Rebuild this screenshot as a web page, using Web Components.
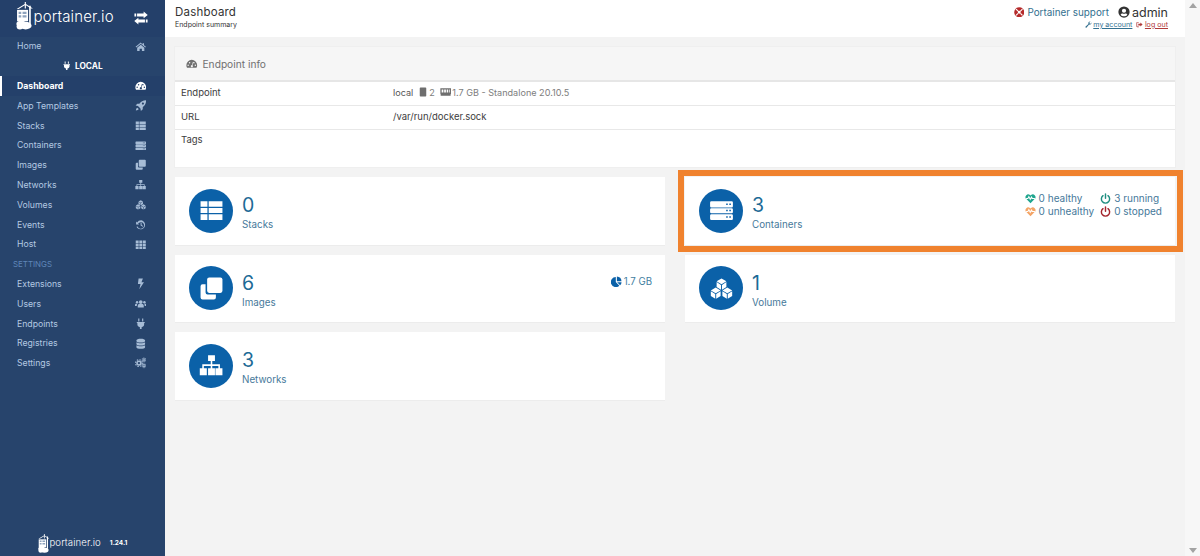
<!DOCTYPE html>
<html lang="en">
<head>
<meta charset="utf-8">
<title>Portainer dashboard</title>
<style>
html,body{margin:0;height:100%;overflow:hidden}
body{font-family:Inter,"Open Sans","Liberation Sans",sans-serif;background:#f3f3f3}
</style>
</head>
<body>
<x-app>
  <x-sidebar slot="side">
    <x-nav icon="home">Home</x-nav>
    <x-nav-title>LOCAL</x-nav-title>
    <x-nav icon="tach" active>Dashboard</x-nav>
    <x-nav icon="rocket">App Templates</x-nav>
    <x-nav icon="thlist">Stacks</x-nav>
    <x-nav icon="server">Containers</x-nav>
    <x-nav icon="clone">Images</x-nav>
    <x-nav icon="sitemap">Networks</x-nav>
    <x-nav icon="cubes">Volumes</x-nav>
    <x-nav icon="history">Events</x-nav>
    <x-nav icon="th">Host</x-nav>
    <x-nav-section>SETTINGS</x-nav-section>
    <x-nav icon="bolt">Extensions</x-nav>
    <x-nav icon="users">Users</x-nav>
    <x-nav icon="plug">Endpoints</x-nav>
    <x-nav icon="db">Registries</x-nav>
    <x-nav icon="cogs">Settings</x-nav>
  </x-sidebar>
  <x-topbar slot="top"></x-topbar>
  <x-panel>
    <x-row label="Endpoint"><x-endpoint-meta></x-endpoint-meta></x-row>
    <x-row label="URL">/var/run/docker.sock</x-row>
    <x-row label="Tags" tall></x-row>
  </x-panel>
  <x-card-grid>
    <x-card icon="thlist" value="0" label="Stacks"></x-card>
    <x-card icon="server" value="3" label="Containers" highlight>
      <x-container-stats></x-container-stats>
    </x-card>
    <x-card icon="clone" value="6" label="Images">
      <x-size-stat>1.7 GB</x-size-stat>
    </x-card>
    <x-card icon="cubes" value="1" label="Volume"></x-card>
    <x-card icon="sitemap" value="3" label="Networks"></x-card>
  </x-card-grid>
</x-app>

<script>
const cube=(x,y,s)=>{
  const w=s*.87,h=s*.5;
  const p=a=>a.map(q=>q.map(n=>+n.toFixed(2)).join(',')).join(' ');
  return `<polygon points="${p([[x,y-s],[x+w,y-h],[x,y],[x-w,y-h]])}"/>`+
  `<polygon points="${p([[x-w,y-h+.5],[x-.3,y+.5],[x-.3,y+s],[x-w,y+h]])}"/>`+
  `<polygon points="${p([[x+w,y-h+.5],[x+.3,y+.5],[x+.3,y+s],[x+w,y+h]])}"/>`;
};
const BEAT='<path fill-rule="evenodd" d="M8 14.800 1.700 8.400A3.900 3.900 0 0 1 7.200 2.900l.8.800.8-.8a3.900 3.900 0 0 1 5.500 5.500zM1 7.300v1.400h3.600l1-1.900 2 4 1.700-3.300.6 1.200H15V7.300h-3.800L9.300 4.400 7.600 7.800l-2-4-1.800 3.500z"/>';
const ICONS={
 home:'<path d="M8 2 .8 8l.9 1.100L8 3.900l6.300 5.200.9-1.100-2.700-2.200V3h-2v1.700z"/><path d="M3 9.400 8 5.300l5 4.100V14H9.600v-3.300H6.400V14H3z"/>',
 tach:'<path fill-rule="evenodd" d="M8 2.500A7.500 7.500 0 0 0 .5 10c0 1.400.4 2.600 1 3.600h13c.6-1 1-2.200 1-3.600A7.500 7.500 0 0 0 8 2.500zM3 9.200a1 1 0 1 1 0 2 1 1 0 0 1 0-2zm2-3.600a1 1 0 1 1 0 2 1 1 0 0 1 0-2zm6 0a1 1 0 1 1 0 2 1 1 0 0 1 0-2zm2 3.600a1 1 0 1 1 0 2 1 1 0 0 1 0-2zM10.200 6 9 10.200a1.500 1.500 0 1 1-2 .3 1.500 1.500 0 0 1 1.300-.6L9.400 5.800z"/>',
 rocket:'<path fill-rule="evenodd" d="M15.500.5c-4.200 0-7.300 1.700-9.400 4.700H3.200L.8 7.800l3.300.6 3.500 3.500.6 3.300 2.600-2.400V10c3-2.100 4.700-5.200 4.700-9.500zM11 3.500a1.500 1.500 0 1 1 0 3 1.500 1.500 0 0 1 0-3z"/><path d="M3.300 10.700c-1.300.4-2 1.800-2.100 4 2.200-.1 3.600-.8 4-2.100z"/>',
 thlist:'<path d="M1 2h4.400v3.600H1zM6.200 2H15v3.600H6.200zM1 6.400h4.400v3.200H1zM6.200 6.400H15v3.200H6.200zM1 10.400h4.400V14H1zM6.200 10.400H15V14H6.200z"/>',
 server:'<path fill-rule="evenodd" d="M1.500 2h13a.8.800 0 0 1 .8.800v2.500a.8.800 0 0 1-.8.800h-13a.8.800 0 0 1-.8-.800V2.800a.8.800 0 0 1 .8-.800zm9.500 1.500v1h1v-1zm2 0v1h1v-1zM1.500 6.500h13a.8.800 0 0 1 .8.800v1.600a.8.800 0 0 1-.8.800h-13a.8.800 0 0 1-.8-.800V7.300a.8.800 0 0 1 .8-.800zm9.500 1v1h1v-1zm2 0v1h1v-1zM1.500 10.400h13a.8.800 0 0 1 .8.800v2a.8.800 0 0 1-.8.800h-13a.8.800 0 0 1-.8-.800v-2a.8.800 0 0 1 .8-.800zm9.500 1.300v1h1v-1zm2 0v1h1v-1z"/>',
 clone:'<path d="M6.500 1h7.200A1.300 1.300 0 0 1 15 2.300v7.200a1.300 1.300 0 0 1-1.300 1.300H6.500a1.300 1.300 0 0 1-1.300-1.300V2.300A1.300 1.300 0 0 1 6.500 1z"/><path d="M4.200 5.200v5.300a1.300 1.300 0 0 0 1.300 1.300h5.300v1.900A1.300 1.300 0 0 1 9.500 15H2.300A1.300 1.300 0 0 1 1 13.700V6.500a1.300 1.300 0 0 1 1.300-1.300z"/>',
 sitemap:'<path d="M5.800 1.500h4.400v3.600H8.500v2.100h4.900v2.600H15v4.400h-4.500V9.800h1.900V8.300H8.500v1.500h1.700v4.400H5.800V9.800h1.700V8.300H3.100v1.500H5v4.400H.5V9.800h1.600V7.200h5.400V5.100H5.800z"/>',
 cubes:cube(8,5.200,3.600)+cube(4.300,11,3.600)+cube(11.700,11,3.600),
 history:'<path d="M8.500 1.800A6.300 6.300 0 0 0 3 5L1.500 3.500v4.300h4.300L4.300 6.300a4.600 4.600 0 1 1-.6 4.100l-1.600.5a6.300 6.300 0 1 0 6.400-9.100z"/><path d="M7.800 4.800h1.400v3.500l2.200 1.400-.7 1.100-2.900-1.800z"/>',
 th:'<path d="M1 2h4.100v3.600H1zM6 2h4v3.600H6zM10.900 2H15v3.600h-4.100zM1 6.300h4.100v3.500H1zM6 6.300h4v3.500H6zM10.900 6.300H15v3.500h-4.100zM1 10.500h4.100V14H1zM6 10.500h4V14H6zM10.900 10.500H15V14h-4.100z"/>',
 bolt:'<path d="M5 .8h6L9 5.800h3.500L6 15.500l1.700-7.300H4z"/>',
 users:'<circle cx="8" cy="5.600" r="2.600"/><path d="M3.800 13.300V11c0-1.800 1.200-2.700 2.200-2.700h4c1 0 2.200.9 2.200 2.700v2.300z"/><circle cx="2.900" cy="5.800" r="1.700"/><circle cx="13.100" cy="5.800" r="1.700"/><path d="M0 11.300V9.800C0 8.600.8 8 1.700 8h1.700c-.6.600-.9 1.600-.9 3v.3zM16 11.300V9.800c0-1.200-.8-1.800-1.700-1.800h-1.700c.6.600.9 1.600.9 3v.3z"/>',
 plug:'<path d="M4.500.8h1.600v4H4.500zM9.900.8h1.600v4H9.900zM2.500 5.400h11v1.500h-.8V9c0 2-1.500 3.400-3.500 3.700v2.500H6.800v-2.500C4.800 12.400 3.300 11 3.300 9V6.900h-.8z"/>',
 db:'<path d="M2 3.200C2 1.800 4.700 1 8 1s6 .8 6 2.200v1C14 5.600 11.300 6.400 8 6.400s-6-.8-6-2.200zM2 6c1.200.9 3.500 1.400 6 1.400S12.800 6.900 14 6v2.400c0 1.400-2.700 2.200-6 2.200s-6-.8-6-2.200zM2 10.200c1.200.9 3.500 1.400 6 1.400s4.800-.5 6-1.400v2.600C14 14.200 11.300 15 8 15s-6-.8-6-2.200z"/>',
 cogs:'<g fill="none" stroke="currentColor"><circle cx="5.500" cy="8.500" r="2.700" stroke-width="2.200"/><circle cx="5.500" cy="8.500" r="4.700" stroke-width="1.600" stroke-dasharray="2 1.700"/><circle cx="12.500" cy="4" r="1.500" stroke-width="1.500"/><circle cx="12.500" cy="4" r="2.900" stroke-width="1.100" stroke-dasharray="1.300 1"/><circle cx="12.500" cy="12" r="1.500" stroke-width="1.500"/><circle cx="12.500" cy="12" r="2.900" stroke-width="1.100" stroke-dasharray="1.300 1"/></g>',
 exchange:'<path d="M.5 2.800h2v3.400h-2zM3.500 2.800h7.500V.6l4.700 3.900L11 8.400V6.200H3.500z"/><path d="M15.500 9.800h-2v3.400h2zM12.500 9.800H5V7.600L.3 11.500 5 15.400v-2.200h7.500z"/>',
 heartbeat:BEAT,
 heart:BEAT,
 power:'<g fill="none" stroke="currentColor" stroke-width="2.100" stroke-linecap="round"><path d="M4.400 3.900a6 6 0 1 0 7.200 0"/><path d="M8 1.500v6"/></g>',
 pie:'<path d="M7 1.600v7.300l5.200 5.200A7.300 7.300 0 1 1 7 1.600z"/><path d="M8.500.8a7.300 7.300 0 0 1 6.800 6.800H8.500z"/><path d="M8.900 9h6.500a7.200 7.200 0 0 1-2.100 4.500z"/>',
 chip:'<path d="M4 .8h8A1.200 1.200 0 0 1 13.200 2v12a1.200 1.200 0 0 1-1.200 1.200H4A1.200 1.200 0 0 1 2.800 14V2A1.200 1.200 0 0 1 4 .8z"/>',
 memory:'<path fill-rule="evenodd" d="M.5 3h15v8h-.7v2.500H.9V11H.5zM2.300 4.800v4.400h2.400V4.800zm3.500 0v4.400h2.400V4.800zm3.500 0v4.400h1.900V4.800zm3 0v4.400h1.200V4.800z"/>',
 ring:'<path fill-rule="evenodd" d="M8 .3a7.700 7.700 0 1 1 0 15.400A7.700 7.700 0 0 1 8 .3zm0 5.500a2.200 2.200 0 1 0 0 4.400 2.200 2.200 0 0 0 0-4.400zM3.800 2.500 2.500 3.800l3.100 3 1.200-1.200zm8.400 0-3 3.100 1.200 1.200 3.100-3zM5.600 9.200l-3.100 3 1.300 1.300 3-3.100zm4.800 0-1.200 1.200 3 3.100 1.300-1.300z"/>',
 user:'<path fill-rule="evenodd" d="M8 .5a7.500 7.500 0 1 1 0 15 7.500 7.500 0 0 1 0-15zm0 3a2.800 2.800 0 1 0 0 5.600 2.800 2.800 0 0 0 0-5.600zm0 10.200c1.800 0 3.500-.8 4.500-2.100-.4-1.100-1.500-1.700-2.600-1.700-.6.200-1.200.3-1.900.3s-1.300-.1-1.900-.3c-1.100 0-2.200.6-2.600 1.700 1 1.300 2.700 2.100 4.500 2.100z"/>',
 wrench:'<path d="M15 4.200a4.200 4.200 0 0 1-5.600 4L3.700 14.600a1.500 1.500 0 0 1-2.300-2.200L7.800 6.600A4.200 4.200 0 0 1 12.600 1L10 3.700l.6 2.100 2.100.6 2.100-2.700z"/>',
 signout:'<path d="M6.500 2H3a2 2 0 0 0-2 2v8a2 2 0 0 0 2 2h3.500v-1.700H3.200a.5.500 0 0 1-.5-.5V4.200c0-.3.200-.5.500-.5h3.300z"/><path d="M10 3.500 15 8l-5 4.500V10H5.200V6H10z"/>'
};

function def(name,css,html){
  customElements.define(name,class extends HTMLElement{
    constructor(){super();this.attachShadow({mode:'open'});}
    connectedCallback(){
      const a=n=>this.getAttribute(n)??'';
      const body=typeof html==='function'?html(a,this):html;
      this.shadowRoot.innerHTML=`<style>${css}</style>${body}`;
    }
  });
}

def('x-icon',':host{display:inline-flex;width:1em;height:1em;flex:none;vertical-align:-.12em}svg{width:100%;height:100%;fill:currentColor;display:block}',
  a=>`<svg viewBox="0 0 16 16" aria-hidden="true">${ICONS[a('name')]||''}</svg>`);

def('x-logo',':host{display:inline-flex;align-items:center;color:#fff;font-family:Inter,"Open Sans",sans-serif;font-weight:300}svg{height:var(--h,28px);width:auto;display:block;flex:none;fill:#fff;margin-top:var(--sh,-4px)}span{font-size:var(--fs,15px);letter-spacing:var(--ls,.15px);margin-left:var(--gap,0px);line-height:1;margin-top:var(--sh,-4px)}',
  ()=>`<svg viewBox="0 0 20 32" aria-hidden="true">
    <path d="M.8 8 10 2.400V0h1.300v2.400l8 5.100h-2.200l-5.800-3.700v3.700H10V3.800L3 8z"/>
    <path d="M15 4.200h1.900V25H15z"/>
    <path d="M1.200 9h12.600v13H1.200z"/>
    <path d="M3 11h3v2.600H3zM3 15h3v2.600H3zM7.500 11H12v2.600H7.500zM7.500 15H12v2.600H7.500z" fill="#8ea3bd"/>
    <ellipse cx="6" cy="25" rx="5.600" ry="3.800"/>
    <ellipse cx="11" cy="27" rx="6.800" ry="4.400"/>
    <ellipse cx="4.500" cy="28" rx="3.800" ry="3.400"/>
  </svg><span>portainer.io</span>`);

def('x-nav-title',':host{display:flex;justify-content:center;align-items:center;height:19.800px;gap:3px;font-size:8.300px;font-weight:700;color:#fff;box-sizing:border-box}x-icon{font-size:9.500px}',
  ()=>`<x-icon name="plug"></x-icon><slot></slot>`);

def('x-nav-section',':host{display:flex;align-items:center;height:19.800px;padding-left:13px;font-size:7.900px;color:#5f86b8}','<slot></slot>');

def('x-nav',':host{display:flex;align-items:center;justify-content:space-between;height:19.800px;padding:0 19px 0 17px;font-size:8.700px;color:#b4c9e2;box-sizing:border-box}:host([active]){color:#fff;font-weight:700;background:#24406a;box-shadow:inset 2px 0 0 #fff}x-icon{font-size:11.500px;opacity:.9}:host([active]) x-icon{opacity:1}',
  a=>`<span><slot></slot></span><x-icon name="${a('icon')}"></x-icon>`);

def('x-sidebar',':host{display:flex;flex-direction:column;width:165px;height:556px;background:#27446c;flex:none;color:#fff}header{display:flex;align-items:center;justify-content:space-between;height:36.500px;padding:0 17px 0 16px;background:#24406a;box-sizing:border-box}header x-icon{font-size:14px}nav{flex:1;display:flex;flex-direction:column}footer{display:flex;align-items:center;justify-content:center;gap:9px;height:37px;font-size:6.500px;font-weight:700;padding-top:11px;box-sizing:border-box}footer x-logo{--h:19px;--fs:9.600px;--ls:.1px;--gap:0px;--sh:0px}',
  ()=>`<header><x-logo></x-logo><x-icon name="exchange"></x-icon></header><nav><slot></slot></nav><footer><x-logo></x-logo><span>1.24.1</span></footer>`);

def('x-topbar',`:host{display:flex;justify-content:space-between;height:37px;background:#fff;padding:0 17px 0 10px;box-sizing:border-box;flex:none}
.t{padding-top:5px;color:#333}.t b{display:block;font-weight:400;font-size:11.500px;line-height:14px;letter-spacing:.2px}.t small{display:block;font-size:7px;line-height:11px;color:#333}
.r{display:flex;flex-direction:column;align-items:flex-end;padding-top:4px}
.l1{display:flex;align-items:center;height:16px;font-size:9.900px;color:#33708f}.l1 x-icon{font-size:10.500px;color:#b52a2a;margin-right:3px}
.ad{display:flex;align-items:center;margin-left:9px;font-size:12.500px;color:#333}.l1 .ad x-icon{font-size:12px;color:#333;margin-right:2px}
.l2{display:flex;align-items:center;gap:4px;font-size:7.100px;height:10px;margin-top:-1px}.l2 a{display:flex;align-items:center;gap:1.500px;text-decoration:none}.l2 u{text-underline-offset:1px}.m{color:#33708f}.o{color:#b03a3a}.l2 x-icon{font-size:7px}`,
  ()=>`<div class="t"><b>Dashboard</b><small>Endpoint summary</small></div>
  <div class="r"><div class="l1"><x-icon name="ring"></x-icon><span>Portainer support</span><span class="ad"><x-icon name="user"></x-icon>admin</span></div>
  <div class="l2"><a class="m"><x-icon name="wrench"></x-icon><u>my account</u></a><a class="o"><x-icon name="signout"></x-icon><u>log out</u></a></div></div>`);

def('x-panel',`:host{display:block;background:#fff;box-shadow:0 0 0 1px #efefef;flex:none}
header{display:flex;align-items:center;gap:5px;height:33px;padding-left:11px;background:#f6f6f6;border-bottom:2px solid #e6e6e6;box-sizing:content-box;font-size:10.200px;color:#707070}
header x-icon{font-size:11.500px}`,
  ()=>`<header><x-icon name="tach"></x-icon>Endpoint info</header><slot></slot>`);

def('x-row',`:host{display:grid;grid-template-columns:212px 1fr;height:24px;padding:0 0 3px 6px;border-bottom:1px solid #e8e8e8;box-sizing:border-box;align-items:center;font-size:9.500px;color:#3d3d3d}
:host([tall]){height:37px;border-bottom:0;align-items:start;padding-top:4px}`,
  a=>`<span>${a('label')}</span><span><slot></slot></span>`);

def('x-endpoint-meta',':host{display:inline-flex;align-items:center;color:#7d7d7d;font-size:9.100px}b{font-weight:400;color:#555;margin-right:5px}x-icon{font-size:10px;color:#6e6e6e}.m{margin:0 1px 0 0}.s{margin-left:5px;margin-right:1px;font-size:11.500px}',
  ()=>`<b>local</b><x-icon class="m" name="chip"></x-icon><span>2</span><x-icon class="s" name="memory"></x-icon><span>1.7 GB - Standalone 20.10.5</span>`);

def('x-card-grid',':host{display:grid;grid-template-columns:1fr 1fr;column-gap:20px;row-gap:10px;grid-auto-rows:67.500px;margin-top:10px}','<slot></slot>');

def('x-card',`:host{display:flex;position:relative;background:#fff;box-shadow:0 1px 0 0 #ececec;padding:0 13px 0 14px;align-items:center;box-sizing:border-box}
.c{width:44px;height:44px;border-radius:50%;background:#0b61a8;color:#fff;display:flex;align-items:center;justify-content:center;flex:none;margin-right:9px}
.c x-icon{font-size:25px}
.b{padding-top:3px}
.v{font-size:19.500px;line-height:24px;color:#1d6a96;font-weight:400;padding-bottom:1px}
.l{font-size:9.800px;line-height:13px;color:#46799a}
.x{margin-left:auto;align-self:flex-start;padding-top:16px}
:host([highlight])::after{content:"";position:absolute;inset:-7px -8px -7px -7px;border:6px solid #f0822e;pointer-events:none}`,
  a=>`<div class="c"><x-icon name="${a('icon')}"></x-icon></div><div class="b"><div class="v">${a('value')}</div><div class="l">${a('label')}</div></div><div class="x"><slot></slot></div>`);

def('x-size-stat',':host{display:inline-flex;align-items:center;gap:2px;font-size:9.700px;color:#42809f;margin-top:-2px}x-icon{font-size:11px;color:#0b61a8}',
  ()=>`<x-icon name="pie"></x-icon><slot></slot>`);

def('x-container-stats',`:host{display:grid;grid-template-columns:auto auto;column-gap:6px;font-size:10px;line-height:13px;color:#46799a;margin-top:-1px}
span{display:flex;align-items:center;gap:3px;white-space:nowrap}x-icon{font-size:11px}.a{color:#1fa58e}.b{color:#f4a465}.d{color:#1f8e80}.e{color:#a3242c}`,
  ()=>`<span><x-icon class="a" name="heartbeat"></x-icon>0 healthy</span><span><x-icon class="d" name="power"></x-icon>3 running</span>
  <span><x-icon class="b" name="heart"></x-icon>0 unhealthy</span><span><x-icon class="e" name="power"></x-icon>0 stopped</span>`);

def('x-scrollbar',':host{display:flex;flex-direction:column;justify-content:space-between;align-items:center;width:15px;flex:none;background:#f7f7f7;height:556px;padding:3px 0;box-sizing:border-box}i{width:0;height:0;border-left:4px solid transparent;border-right:4px solid transparent}.u{border-bottom:5px solid #a3a3a3}.d{border-top:5px solid #a3a3a3}','<i class="u"></i><i class="d"></i>');

def('x-app',`:host{display:flex;width:1200px;height:556px;overflow:hidden}
main{flex:1;min-width:0;display:flex;flex-direction:column}
.content{padding:10px;flex:1}`,
  ()=>`<slot name="side"></slot><main><slot name="top"></slot><div class="content"><slot></slot></div></main><x-scrollbar></x-scrollbar>`);
</script>
</body>
</html>
